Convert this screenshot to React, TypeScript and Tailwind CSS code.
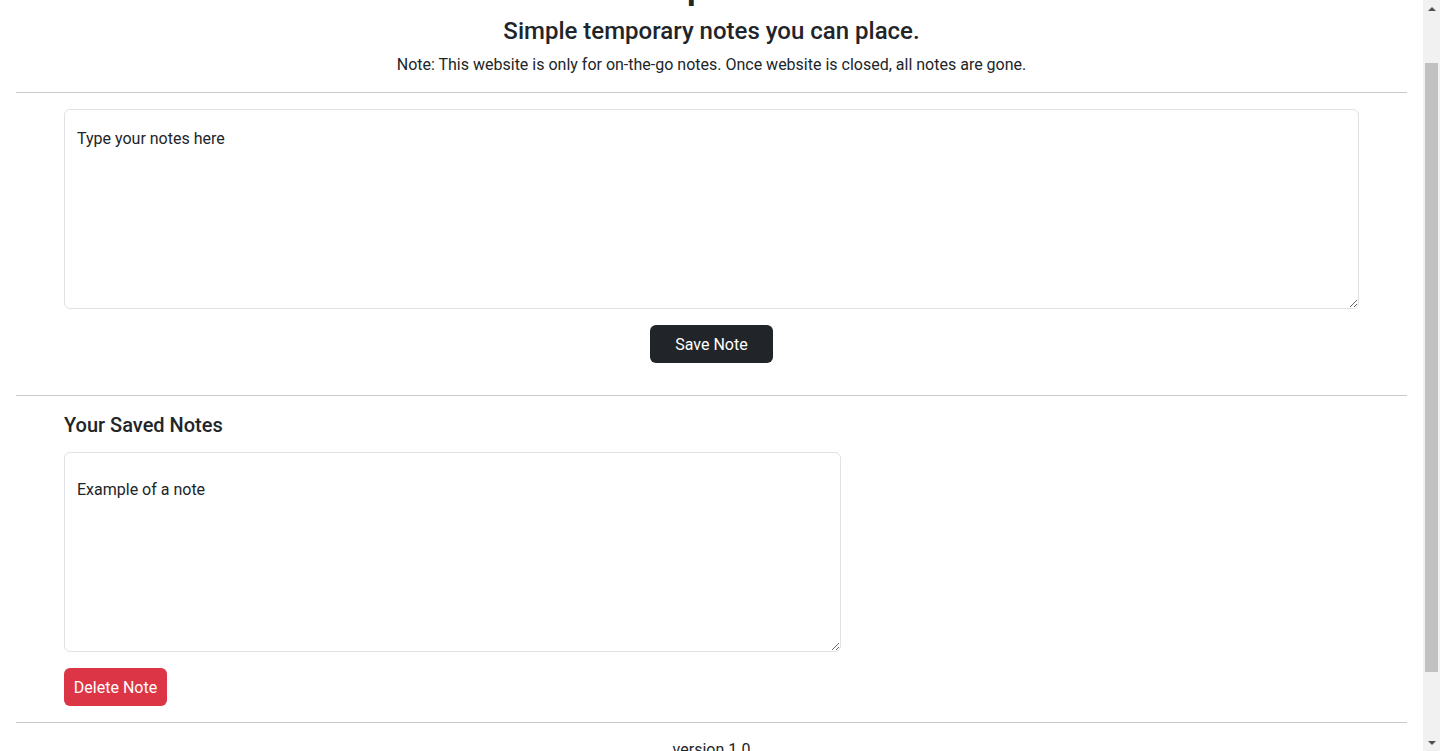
function Scrollbar() {
  return (
    <div className="flex w-[17px] shrink-0 flex-col bg-[#f1f1f1]">
      <div className="flex h-[17px] items-center justify-center">
        <div className="h-0 w-0 border-x-[4px] border-b-[4px] border-x-transparent border-b-[#505050]" />
      </div>
      <div className="flex-1 px-[2px]">
        <div className="mt-[46px] h-[609px] bg-[#c1c1c1]" />
      </div>
      <div className="flex h-[17px] items-center justify-center">
        <div className="h-0 w-0 border-x-[4px] border-t-[4px] border-x-transparent border-t-[#505050]" />
      </div>
    </div>
  );
}

export default function App() {
  return (
    <div className="flex h-[751px] overflow-hidden bg-white font-['Roboto',sans-serif] text-[16px] text-[#212529]">
      <main className="flex-1 overflow-hidden">
        <div className="-mt-[39px]">
          <h1 className="mb-2 text-center text-[40px] font-medium leading-[48px]">TempNotes</h1>
          <h3 className="mb-[7px] text-center text-[24px] font-medium leading-[29px]">
            Simple temporary notes you can place.
          </h3>
          <p className="text-center leading-6">
            Note: This website is only for on-the-go notes. Once website is closed, all notes are gone.
          </p>

          <hr className="mx-4 mt-[15px] border-[#c8c9ca]" />

          <section className="mx-4 px-12 pt-4">
            <textarea
              className="block h-[200px] w-full rounded-md border border-[#dee2e6] px-3 pt-[17px] leading-6 text-[#212529] outline-none"
              defaultValue="Type your notes here"
            />
            <div className="mt-4 flex justify-center">
              <button className="h-[38px] w-[123px] rounded-md bg-[#212529] pt-[2px] text-white">Save Note</button>
            </div>
          </section>

          <hr className="mx-4 mt-8 border-[#c8c9ca]" />

          <section className="mx-4 px-12 pt-[17px]">
            <h4 className="text-[20px] font-medium leading-6">Your Saved Notes</h4>
            <textarea
              className="mt-[15px] block h-[200px] w-[777px] rounded-md border border-[#dee2e6] px-3 pt-[25px] leading-6 text-[#212529] outline-none"
              defaultValue="Example of a note"
            />
            <button className="mt-4 h-[38px] w-[103px] rounded-md bg-[#dc3545] pt-[2px] text-white">
              Delete Note
            </button>
          </section>

          <hr className="mx-4 mt-4 border-[#c8c9ca]" />

          <footer className="pt-[15px] text-center leading-6">version 1.0</footer>
        </div>
      </main>
      <Scrollbar />
    </div>
  );
}
